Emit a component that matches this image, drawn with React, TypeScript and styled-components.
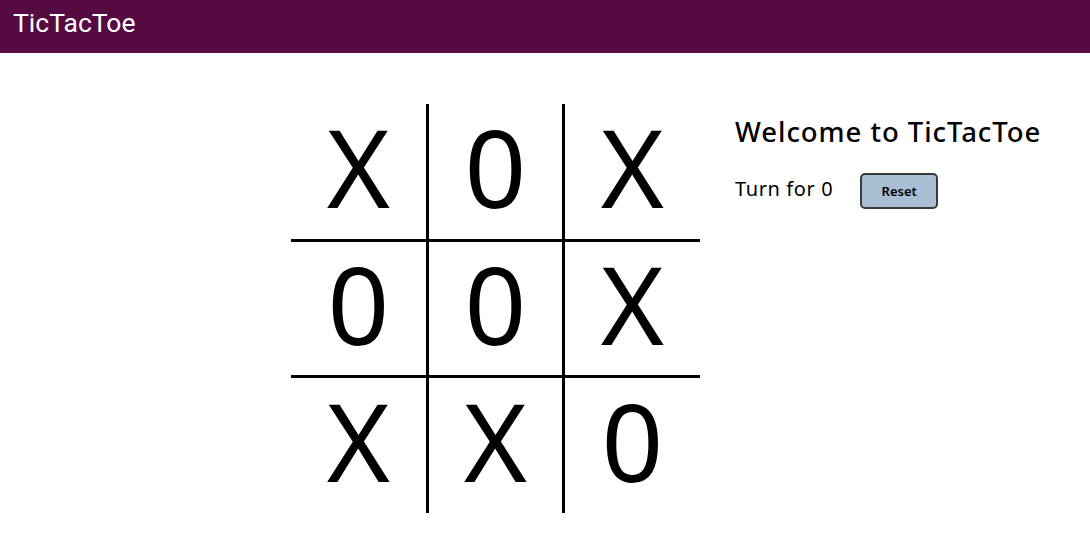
import React, { useState } from "react";
import styled, { createGlobalStyle } from "styled-components";

const GlobalStyle = createGlobalStyle`
  html, body { margin: 0; padding: 0; background: #ffffff; }
  body { font-family: "Noto Sans", "Open Sans", sans-serif; color: #000; }
`;

const Header = styled.header`
  height: 53px;
  background: #550a42;
  display: flex;
  align-items: center;
  padding: 0 13px;
  box-sizing: border-box;
`;

const Brand = styled.div`
  font-family: Roboto, "Noto Sans", sans-serif;
  font-size: 26.5px;
  color: #ffffff;
  line-height: 1;
  margin-top: -7px;
`;

const Main = styled.main`
  display: flex;
  align-items: flex-start;
  gap: 35px;
  padding: 51px 0 0 291px;
`;

const Board = styled.div`
  display: grid;
  grid-template-columns: 138px 136px 135px;
  grid-template-rows: 138px 136px 135px;
`;

const Cell = styled.button<{ $right: boolean; $bottom: boolean }>`
  all: unset;
  box-sizing: border-box;
  display: flex;
  align-items: center;
  justify-content: center;
  border-right: ${(p) => (p.$right ? "3px solid #000" : "none")};
  border-bottom: ${(p) => (p.$bottom ? "3px solid #000" : "none")};
  font-family: "Noto Sans", sans-serif;
  font-size: 108px;
  line-height: 1;
  color: #000;
  cursor: pointer;
`;

const Glyph = styled.span`
  display: block;
  margin-top: -9px;
`;

const Info = styled.div`
  display: flex;
  flex-direction: column;
  padding-top: 10px;
`;

const Title = styled.h1`
  margin: 0;
  font-family: "Noto Sans", sans-serif;
  font-size: 27.5px;
  font-weight: 500;
  line-height: 36px;
  letter-spacing: 0.95px;
`;

const TurnRow = styled.div`
  display: flex;
  align-items: center;
  gap: 27px;
  margin-top: 23px;
`;

const Turn = styled.span`
  font-family: "Noto Sans", sans-serif;
  font-size: 20px;
  line-height: 24px;
  letter-spacing: 0.6px;
  margin-top: -4px;
`;

const ResetButton = styled.button`
  width: 78px;
  height: 36px;
  box-sizing: border-box;
  background: #a9bed3;
  border: 2px solid #3a3a3a;
  border-radius: 5px;
  font-family: "Noto Sans", sans-serif;
  font-size: 13px;
  font-weight: 600;
  color: #000;
  cursor: pointer;
  padding: 0;
`;

const initial = ["X", "0", "X", "0", "0", "X", "X", "X", "0"];

export default function App() {
  const [cells, setCells] = useState<string[]>(initial);
  const [turn, setTurn] = useState<string>("0");

  const play = (i: number) => {
    if (cells[i]) return;
    const next = cells.slice();
    next[i] = turn;
    setCells(next);
    setTurn(turn === "X" ? "0" : "X");
  };

  const reset = () => {
    setCells(Array(9).fill(""));
    setTurn("X");
  };

  return (
    <>
      <GlobalStyle />
      <Header>
        <Brand>TicTacToe</Brand>
      </Header>
      <Main>
        <Board>
          {cells.map((c, i) => (
            <Cell
              key={i}
              $right={i % 3 !== 2}
              $bottom={i < 6}
              onClick={() => play(i)}
            >
              <Glyph>{c}</Glyph>
            </Cell>
          ))}
        </Board>
        <Info>
          <Title>Welcome to TicTacToe</Title>
          <TurnRow>
            <Turn>Turn for {turn}</Turn>
            <ResetButton onClick={reset}>Reset</ResetButton>
          </TurnRow>
        </Info>
      </Main>
    </>
  );
}
